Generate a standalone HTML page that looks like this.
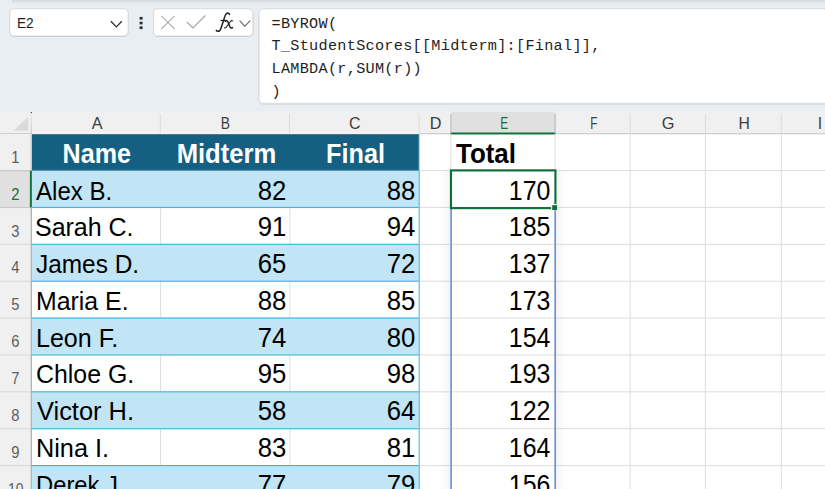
<!DOCTYPE html>
<html><head><meta charset="utf-8"><title>Excel</title>
<style>
html,body{margin:0;padding:0}
body{width:825px;height:489px;overflow:hidden;position:relative;background:#e9eef3;font-family:"Liberation Sans",sans-serif}
div,svg{position:absolute;box-sizing:border-box}
.t{white-space:nowrap;line-height:30px;height:30px}
.t span{display:inline-block}
.ch{font-size:15.7px;color:#3d3d3d;text-align:center}
.rh{font-size:15.7px;color:#5e5e5e;text-align:center;left:0;width:30.4px}
.c{font-size:26.6px;color:#000}
.c span{transform-origin:left center}
.n{font-size:27.2px;color:#000;text-align:right}
.n span{transform-origin:right center;transform:scaleX(.945)}
.hb{font-size:27px;font-weight:bold;color:#fff;text-align:center}
.hb span{transform-origin:center center}
.f{font-family:"Liberation Mono",monospace;font-size:15.2px;letter-spacing:.29px;color:#1f1f1f;left:271.5px;white-space:pre;line-height:22.8px}
</style></head><body>

<svg width="825" height="489" viewBox="0 0 825 489" style="left:0;top:0"><defs><linearGradient id="tg" x1="0" y1="0" x2="0" y2="1"><stop offset="0" stop-color="#d5d9dd"/><stop offset="1" stop-color="#e9eef3"/></linearGradient><linearGradient id="sl" x1="0" y1="0" x2="1" y2="0"><stop offset="0" stop-color="#787882" stop-opacity="0"/><stop offset="1" stop-color="#787882" stop-opacity=".08"/></linearGradient><linearGradient id="sr" x1="0" y1="0" x2="1" y2="0"><stop offset="0" stop-color="#787882" stop-opacity=".08"/><stop offset="1" stop-color="#787882" stop-opacity="0"/></linearGradient><linearGradient id="cs" x1="0" y1="0" x2="0" y2="1"><stop offset="0" stop-color="#e6e6e6"/><stop offset="1" stop-color="#c6c6c6"/></linearGradient></defs>
<rect x="12" y="0" width="813" height="4" fill="url(#tg)" />
<rect x="9.8" y="9.2" width="118.3" height="27.3" rx="4.3" fill="#fff" stroke="#c3c6c9" stroke-width="1"/>
<rect x="9.8" y="8.7" width="118.3" height="27.3" rx="4.3" fill="#fff" stroke="#d9dcdf" stroke-width="1"/>
<rect x="153.5" y="9.2" width="99.4" height="27.3" rx="4.3" fill="#fff" stroke="#c3c6c9" stroke-width="1"/>
<rect x="153.5" y="8.7" width="99.4" height="27.3" rx="4.3" fill="#fff" stroke="#d9dcdf" stroke-width="1"/>
<rect x="258.9" y="9.2" width="599" height="94.7" rx="4.3" fill="#fff" stroke="#c3c6c9" stroke-width="1"/>
<rect x="258.9" y="8.7" width="599" height="94.7" rx="4.3" fill="#fff" stroke="#d9dcdf" stroke-width="1"/>
<path d="M110.9 21.3 L116.3 26.9 L121.8 21.3" fill="none" stroke="#2b2b2b" stroke-width="1.25"/>
<rect x="139.6" y="16.9" width="3" height="2.7" fill="#2e2e2e" />
<rect x="139.6" y="21.7" width="3" height="2.7" fill="#2e2e2e" />
<rect x="139.6" y="26.4" width="3" height="2.7" fill="#2e2e2e" />
<g transform="translate(158 12)"><path d="M3.2 3.9 L16.6 17 M16.6 3.9 L3.2 17" fill="none" stroke="#b3b3b3" stroke-width="1.15"/><path d="M28.8 10 L35 16 L47.3 3.5" fill="none" stroke="#a6a6a6" stroke-width="1.15"/><path d="M81.6 8.6 L86.8 14.1 L92.2 8.6" fill="none" stroke="#666" stroke-width="1.1"/></g>
<g transform="translate(214 10)" fill="none" stroke="#262626" stroke-linecap="round"><path d="M15.4 4.5 C15.5 3.1 13.6 2.6 12.4 3.6 C11.2 4.7 10.7 6.6 10.0 9.0 L7.0 18.2 C6.4 20.0 5.4 21.4 3.9 21.3 C3.0 21.2 2.5 20.8 2.3 20.4" stroke-width="1.55"/><path d="M6.6 10.5 L13.2 10.5" stroke-width="1.3" stroke-linecap="butt"/><path d="M11.3 11.2 C12.4 10.3 13.3 10.6 13.8 11.8 L16.0 16.9 C16.5 18.1 17.4 18.5 18.5 17.6" stroke-width="1.5"/><path d="M18.7 10.9 C17.9 10.4 17.1 10.6 16.4 11.5 L12.9 16.4 C12.1 17.6 11.3 18.3 10.5 17.8" stroke-width="1.1"/></g>
<rect x="0" y="111.9" width="825" height="400" fill="#fff" />
<rect x="0" y="111.9" width="825" height="22.1" fill="#f0f0f0" />
<rect x="451.3" y="111.9" width="103.9" height="22.1" fill="#e0e0e0" />
<rect x="0" y="133.2" width="825" height="1.1" fill="#c9c9c9" />
<rect x="32" y="132" width="387.2" height="2.2" fill="#f5f3f1" />
<rect x="450.6" y="132.5" width="104.8" height="1.9" fill="#0e7039" />
<path d="M28.2 116.4 L28.2 130.7 L13.6 130.7 Z" fill="#dadada"/>
<rect x="30.8" y="112" width="1" height="1.2" fill="#222" />
<rect x="159.8" y="114" width="1" height="19.5" fill="#dcdcdc" />
<rect x="289.0" y="114" width="1" height="19.5" fill="#dcdcdc" />
<rect x="418.7" y="114" width="1" height="19.5" fill="#dcdcdc" />
<rect x="450.4" y="114" width="1" height="19.5" fill="#b4b4b4" />
<rect x="554.6" y="114" width="1" height="19.5" fill="#b4b4b4" />
<rect x="629.7" y="114" width="1" height="19.5" fill="#dcdcdc" />
<rect x="704.9" y="114" width="1" height="19.5" fill="#dcdcdc" />
<rect x="780.8" y="114" width="1" height="19.5" fill="#dcdcdc" />
<rect x="30.8" y="113.5" width="1" height="20.5" fill="url(#cs)" />
<rect x="0" y="134.0" width="30.8" height="400" fill="#f0f0f0" />
<rect x="0" y="170.4" width="30.8" height="36.87" fill="#e0e0e0" />
<rect x="0" y="170.05" width="30.8" height="1.1" fill="#d9d9d9" />
<rect x="0" y="206.92" width="30.8" height="1.1" fill="#d9d9d9" />
<rect x="0" y="243.79" width="30.8" height="1.1" fill="#d9d9d9" />
<rect x="0" y="280.66" width="30.8" height="1.1" fill="#d9d9d9" />
<rect x="0" y="317.53" width="30.8" height="1.1" fill="#d9d9d9" />
<rect x="0" y="354.4" width="30.8" height="1.1" fill="#d9d9d9" />
<rect x="0" y="391.27" width="30.8" height="1.1" fill="#d9d9d9" />
<rect x="0" y="428.14" width="30.8" height="1.1" fill="#d9d9d9" />
<rect x="0" y="465.01" width="30.8" height="1.1" fill="#d9d9d9" />
<rect x="0" y="501.88" width="30.8" height="1.1" fill="#d9d9d9" />
<rect x="0" y="170.1" width="30.8" height="1.2" fill="#c9c9c9" />
<rect x="0" y="206.87" width="30.8" height="1.2" fill="#c9c9c9" />
<rect x="30.7" y="134.0" width="1.2" height="355.0" fill="#a9a9a9" />
<rect x="30.7" y="134" width="1.2" height="35.9" fill="#e4e0e0" />
<rect x="29.9" y="170.9" width="2" height="36.37" fill="#0e7039" />
<rect x="450.4" y="134.5" width="1" height="354.5" fill="#dedede" />
<rect x="554.6" y="134.5" width="1" height="354.5" fill="#dedede" />
<rect x="629.7" y="134.5" width="1" height="354.5" fill="#dedede" />
<rect x="704.9" y="134.5" width="1" height="354.5" fill="#dedede" />
<rect x="780.8" y="134.5" width="1" height="354.5" fill="#dedede" />
<rect x="419.5" y="170.07" width="405.5" height="1.05" fill="#dedede" />
<rect x="419.5" y="206.94" width="405.5" height="1.05" fill="#dedede" />
<rect x="419.5" y="243.81" width="405.5" height="1.05" fill="#dedede" />
<rect x="419.5" y="280.69" width="405.5" height="1.05" fill="#dedede" />
<rect x="419.5" y="317.56" width="405.5" height="1.05" fill="#dedede" />
<rect x="419.5" y="354.43" width="405.5" height="1.05" fill="#dedede" />
<rect x="419.5" y="391.3" width="405.5" height="1.05" fill="#dedede" />
<rect x="419.5" y="428.17" width="405.5" height="1.05" fill="#dedede" />
<rect x="419.5" y="465.04" width="405.5" height="1.05" fill="#dedede" />
<rect x="419.5" y="501.91" width="405.5" height="1.05" fill="#dedede" />
<rect x="31.9" y="134.2" width="387.3" height="36.2" fill="#156082" />
<rect x="31.9" y="170.4" width="387.4" height="36.87" fill="#c1e5f5" />
<rect x="160.1" y="207.27" width="1" height="36.87" fill="#dedede" />
<rect x="289.3" y="207.27" width="1" height="36.87" fill="#dedede" />
<rect x="31.9" y="244.14" width="387.4" height="36.87" fill="#c1e5f5" />
<rect x="160.1" y="281.01" width="1" height="36.87" fill="#dedede" />
<rect x="289.3" y="281.01" width="1" height="36.87" fill="#dedede" />
<rect x="31.9" y="317.88" width="387.4" height="36.87" fill="#c1e5f5" />
<rect x="160.1" y="354.75" width="1" height="36.87" fill="#dedede" />
<rect x="289.3" y="354.75" width="1" height="36.87" fill="#dedede" />
<rect x="31.9" y="391.62" width="387.4" height="36.87" fill="#c1e5f5" />
<rect x="160.1" y="428.49" width="1" height="36.87" fill="#dedede" />
<rect x="289.3" y="428.49" width="1" height="36.87" fill="#dedede" />
<rect x="31.9" y="465.36" width="387.4" height="36.87" fill="#c1e5f5" />
<rect x="31.9" y="169.4" width="387.7" height="1.2" fill="#1b6a8e" />
<rect x="31.9" y="206.9" width="387.7" height="1.15" fill="#46b1e1" />
<rect x="31.9" y="243.76" width="387.7" height="1.15" fill="#46b1e1" />
<rect x="31.9" y="280.63" width="387.7" height="1.15" fill="#46b1e1" />
<rect x="31.9" y="317.5" width="387.7" height="1.15" fill="#46b1e1" />
<rect x="31.9" y="354.38" width="387.7" height="1.15" fill="#46b1e1" />
<rect x="31.9" y="391.25" width="387.7" height="1.15" fill="#46b1e1" />
<rect x="31.9" y="428.12" width="387.7" height="1.15" fill="#46b1e1" />
<rect x="31.9" y="464.99" width="387.7" height="1.15" fill="#46b1e1" />
<rect x="31.9" y="501.86" width="387.7" height="1.15" fill="#46b1e1" />
<rect x="418.5" y="170.4" width="1.5" height="318.6" fill="#7cc6ea" />
<rect x="418.75" y="134.4" width="1.1" height="36.0" fill="#a9d9f1" />
<rect x="440" y="170.4" width="10.2" height="400" fill="url(#sl)" />
<rect x="556.4" y="170.4" width="9" height="400" fill="url(#sr)" />
<rect x="450.3" y="207.27" width="1.6" height="281.73" fill="#6a90da" />
<rect x="554.45" y="207.27" width="1.6" height="281.73" fill="#6a90da" />
<rect x="450.97" y="170.38" width="104.45" height="37.72" fill="none" stroke="#0e7039" stroke-width="2.15"/>
<rect x="551.1" y="204.07" width="6.4" height="6.4" fill="#fff" />
<rect x="552.2" y="205.17" width="4.9" height="4.9" fill="#0e7039" /></svg>
<div class="t " style="left:16.6px;width:30px;top:8.03px;font-size:15.2px;color:#1f1f1f"><span style="transform:scaleX(.9);transform-origin:left center">E2</span></div>
<div class="f" style="top:12.7px">=BYROW(
T_StudentScores[[Midterm]:[Final]],
LAMBDA(r,SUM(r))
)</div>
<div class="t ch" style="left:32.6px;width:128.5px;top:108.56px;"><span style="transform:scaleX(1.03)">A</span></div>
<div class="t ch" style="left:161.1px;width:129.2px;top:108.56px;"><span style="transform:scaleX(0.88)">B</span></div>
<div class="t ch" style="left:290.3px;width:129.7px;top:108.56px;"><span style="transform:scaleX(1.02)">C</span></div>
<div class="t ch" style="left:420.0px;width:31.7px;top:108.56px;"><span style="transform:scaleX(1.03)">D</span></div>
<div class="t ch" style="left:451.7px;width:104.2px;top:108.56px;color:#1a6b3c"><span style="transform:scaleX(0.76)">E</span></div>
<div class="t ch" style="left:555.9px;width:75.1px;top:108.56px;"><span style="transform:scaleX(0.74)">F</span></div>
<div class="t ch" style="left:631.0px;width:75.2px;top:108.56px;"><span style="transform:scaleX(1.04)">G</span></div>
<div class="t ch" style="left:706.2px;width:75.9px;top:108.56px;"><span style="transform:scaleX(1.0)">H</span></div>
<div class="t ch" style="left:782.1px;width:75.6px;top:108.56px;"><span style="transform:scaleX(1)">I</span></div>
<div class="t rh" style="left:0px;width:30.6px;top:142.76px;"><span style="transform:scaleX(0.94)">1</span></div>
<div class="t rh" style="left:0px;width:30.6px;top:179.63px;color:#1a6b3c"><span style="transform:scaleX(0.94)">2</span></div>
<div class="t rh" style="left:0px;width:30.6px;top:216.5px;"><span style="transform:scaleX(0.94)">3</span></div>
<div class="t rh" style="left:0px;width:30.6px;top:253.37px;"><span style="transform:scaleX(0.94)">4</span></div>
<div class="t rh" style="left:0px;width:30.6px;top:290.24px;"><span style="transform:scaleX(0.94)">5</span></div>
<div class="t rh" style="left:0px;width:30.6px;top:327.11px;"><span style="transform:scaleX(0.94)">6</span></div>
<div class="t rh" style="left:0px;width:30.6px;top:363.98px;"><span style="transform:scaleX(0.94)">7</span></div>
<div class="t rh" style="left:0px;width:30.6px;top:400.85px;"><span style="transform:scaleX(0.94)">8</span></div>
<div class="t rh" style="left:0px;width:30.6px;top:437.72px;"><span style="transform:scaleX(0.94)">9</span></div>
<div class="t rh" style="left:0px;width:30.6px;top:474.59px;"><span style="transform:scaleX(0.89)">10</span></div>
<div class="t rh" style="left:0px;width:30.6px;top:511.46px;"><span style="transform:scaleX(0.89)">11</span></div>
<div class="t hb" style="left:17.15px;width:160px;top:138.54px;"><span style="transform:scaleX(0.93)">Name</span></div>
<div class="t hb" style="left:146.05px;width:160px;top:138.54px;"><span style="transform:scaleX(0.95)">Midterm</span></div>
<div class="t hb" style="left:275.65px;width:160px;top:138.54px;"><span style="transform:scaleX(0.935)">Final</span></div>
<div class="t c" style="left:36.2px;width:125px;top:175.68px;"><span style="transform:scaleX(0.905)">Alex B.</span></div>
<div class="t n" style="left:160.4px;width:125.4px;top:175.63px;"><span>82</span></div>
<div class="t n" style="left:289.6px;width:125.4px;top:175.63px;"><span>88</span></div>
<div class="t n" style="left:451.0px;width:99.3px;top:175.63px;"><span style="transform:scaleX(.915)">170</span></div>
<div class="t c" style="left:35.2px;width:125px;top:212.44px;"><span style="transform:scaleX(0.939)">Sarah C.</span></div>
<div class="t n" style="left:160.4px;width:125.4px;top:212.39px;"><span>91</span></div>
<div class="t n" style="left:289.6px;width:125.4px;top:212.39px;"><span>94</span></div>
<div class="t n" style="left:451.0px;width:99.3px;top:212.39px;"><span style="transform:scaleX(.915)">185</span></div>
<div class="t c" style="left:35.7px;width:125px;top:249.2px;"><span style="transform:scaleX(0.918)">James D.</span></div>
<div class="t n" style="left:160.4px;width:125.4px;top:249.15px;"><span>65</span></div>
<div class="t n" style="left:289.6px;width:125.4px;top:249.15px;"><span>72</span></div>
<div class="t n" style="left:451.0px;width:99.3px;top:249.15px;"><span style="transform:scaleX(.915)">137</span></div>
<div class="t c" style="left:35.7px;width:125px;top:285.96px;"><span style="transform:scaleX(0.935)">Maria E.</span></div>
<div class="t n" style="left:160.4px;width:125.4px;top:285.91px;"><span>88</span></div>
<div class="t n" style="left:289.6px;width:125.4px;top:285.91px;"><span>85</span></div>
<div class="t n" style="left:451.0px;width:99.3px;top:285.91px;"><span style="transform:scaleX(.915)">173</span></div>
<div class="t c" style="left:36.0px;width:125px;top:322.72px;"><span style="transform:scaleX(0.942)">Leon F.</span></div>
<div class="t n" style="left:160.4px;width:125.4px;top:322.67px;"><span>74</span></div>
<div class="t n" style="left:289.6px;width:125.4px;top:322.67px;"><span>80</span></div>
<div class="t n" style="left:451.0px;width:99.3px;top:322.67px;"><span style="transform:scaleX(.915)">154</span></div>
<div class="t c" style="left:36.0px;width:125px;top:359.48px;"><span style="transform:scaleX(0.935)">Chloe G.</span></div>
<div class="t n" style="left:160.4px;width:125.4px;top:359.43px;"><span>95</span></div>
<div class="t n" style="left:289.6px;width:125.4px;top:359.43px;"><span>98</span></div>
<div class="t n" style="left:451.0px;width:99.3px;top:359.43px;"><span style="transform:scaleX(.915)">193</span></div>
<div class="t c" style="left:36.7px;width:125px;top:396.24px;"><span style="transform:scaleX(0.956)">Victor H.</span></div>
<div class="t n" style="left:160.4px;width:125.4px;top:396.19px;"><span>58</span></div>
<div class="t n" style="left:289.6px;width:125.4px;top:396.19px;"><span>64</span></div>
<div class="t n" style="left:451.0px;width:99.3px;top:396.19px;"><span style="transform:scaleX(.915)">122</span></div>
<div class="t c" style="left:35.9px;width:125px;top:433.0px;"><span style="transform:scaleX(0.95)">Nina I.</span></div>
<div class="t n" style="left:160.4px;width:125.4px;top:432.95px;"><span>83</span></div>
<div class="t n" style="left:289.6px;width:125.4px;top:432.95px;"><span>81</span></div>
<div class="t n" style="left:451.0px;width:99.3px;top:432.95px;"><span style="transform:scaleX(.915)">164</span></div>
<div class="t c" style="left:35.9px;width:125px;top:469.76px;"><span style="transform:scaleX(0.895)">Derek J.</span></div>
<div class="t n" style="left:160.4px;width:125.4px;top:469.71px;"><span>77</span></div>
<div class="t n" style="left:289.6px;width:125.4px;top:469.71px;"><span>79</span></div>
<div class="t n" style="left:451.0px;width:99.3px;top:469.71px;"><span style="transform:scaleX(.915)">156</span></div>
<div class="t c" style="left:456.2px;width:100px;top:138.54px;font-weight:bold;font-size:27px"><span style="transform:scaleX(.96)">Total</span></div>
</body></html>
